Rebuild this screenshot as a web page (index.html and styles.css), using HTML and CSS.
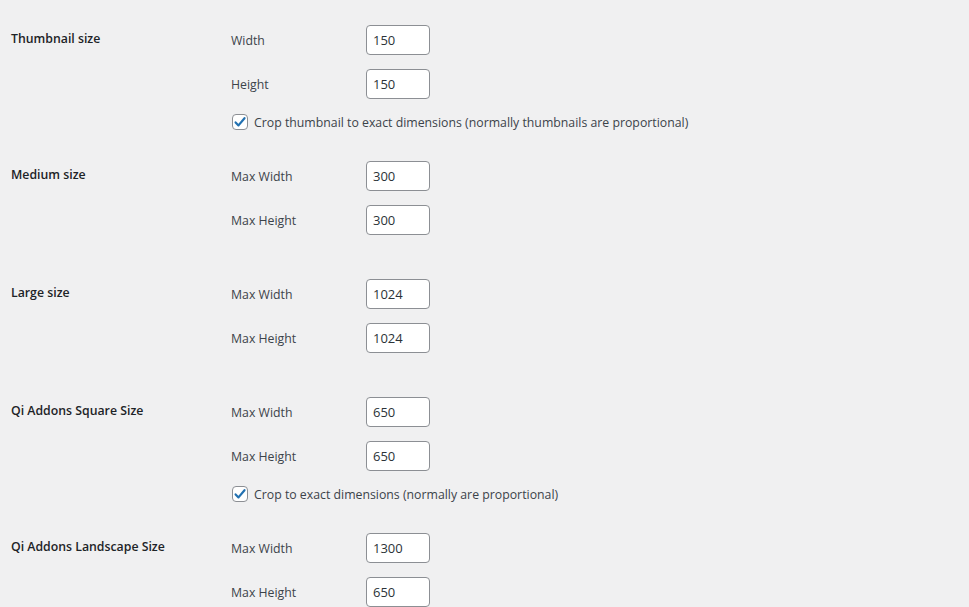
FILE: index.html
```html
<!DOCTYPE html>
<html lang="en">
<head>
    <meta charset="UTF-8">
    <meta name="viewport" content="width=device-width, initial-scale=1.0">
    <title>Media Settings</title>
    <link rel="stylesheet" href="styles.css">
</head>
<body>
    <main class="settings">

        <section class="size-row has-crop">
            <h3 class="size-title">Thumbnail size</h3>
            <div class="size-fields">
                <div class="field"><label>Width</label><input class="small-text" type="text" value="150"></div>
                <div class="field"><label>Height</label><input class="small-text" type="text" value="150"></div>
                <div class="crop">
                    <span class="checkbox"><svg viewBox="0 0 16 16" width="16" height="16"><path d="M3.6 8.4l2.9 3 6-7.2" fill="none" stroke="#2271b1" stroke-width="2.2" stroke-linecap="round" stroke-linejoin="round"/></svg></span>
                    <span>Crop thumbnail to exact dimensions (normally thumbnails are proportional)</span>
                </div>
            </div>
        </section>

        <section class="size-row">
            <h3 class="size-title">Medium size</h3>
            <div class="size-fields">
                <div class="field"><label>Max Width</label><input class="small-text" type="text" value="300"></div>
                <div class="field"><label>Max Height</label><input class="small-text" type="text" value="300"></div>
            </div>
        </section>

        <section class="size-row">
            <h3 class="size-title">Large size</h3>
            <div class="size-fields">
                <div class="field"><label>Max Width</label><input class="small-text" type="text" value="1024"></div>
                <div class="field"><label>Max Height</label><input class="small-text" type="text" value="1024"></div>
            </div>
        </section>

        <section class="size-row has-crop">
            <h3 class="size-title">Qi Addons Square Size</h3>
            <div class="size-fields">
                <div class="field"><label>Max Width</label><input class="small-text" type="text" value="650"></div>
                <div class="field"><label>Max Height</label><input class="small-text" type="text" value="650"></div>
                <div class="crop">
                    <span class="checkbox"><svg viewBox="0 0 16 16" width="16" height="16"><path d="M3.6 8.4l2.9 3 6-7.2" fill="none" stroke="#2271b1" stroke-width="2.2" stroke-linecap="round" stroke-linejoin="round"/></svg></span>
                    <span>Crop to exact dimensions (normally are proportional)</span>
                </div>
            </div>
        </section>

        <section class="size-row">
            <h3 class="size-title">Qi Addons Landscape Size</h3>
            <div class="size-fields">
                <div class="field"><label>Max Width</label><input class="small-text" type="text" value="1300"></div>
                <div class="field"><label>Max Height</label><input class="small-text" type="text" value="650"></div>
            </div>
        </section>

    </main>
</body>
</html>
```

FILE: styles.css
```css
*{
    margin: 0;
    padding: 0;
    box-sizing: border-box;
}
html{
    font: 12.3px "Open Sans", "Noto Sans", sans-serif;
}
body{
    background: #f0f0f1;
    color: #3c434a;
    overflow: hidden;
    height: 607px;
}
.settings{
    padding-top: 25px;
}
.size-row{
    display: grid;
    grid-template-columns: 221px 1fr;
    padding-bottom: 44px;
}
.size-row.has-crop{
    padding-bottom: 29px;
}
.size-title{
    padding-left: 11px;
    font-size: 12.3px;
    font-weight: 600;
    color: #1d2327;
    line-height: 27px;
}
.size-fields{
    display: flex;
    flex-direction: column;
    gap: 14px;
    padding-left: 10px;
}
.field{
    display: flex;
    align-items: center;
    height: 30px;
}
.field > label{
    width: 135px;
}
.small-text{
    width: 64px;
    height: 30px;
    padding: 0 6px;
    border: 1px solid #8c8f94;
    border-radius: 4px;
    background: #fff;
    color: #2c3338;
    font: 13px "Open Sans", "Noto Sans", sans-serif;
}
.crop{
    display: flex;
    align-items: center;
    gap: 6px;
    height: 20px;
    margin-top: -1px;
    padding-left: 1px;
}
.checkbox{
    width: 16px;
    height: 16px;
    border: 1px solid #8c8f94;
    border-radius: 4px;
    background: #fff;
    display: flex;
    align-items: center;
    justify-content: center;
}
.checkbox svg{
    display: block;
    margin: -1px;
}
```
